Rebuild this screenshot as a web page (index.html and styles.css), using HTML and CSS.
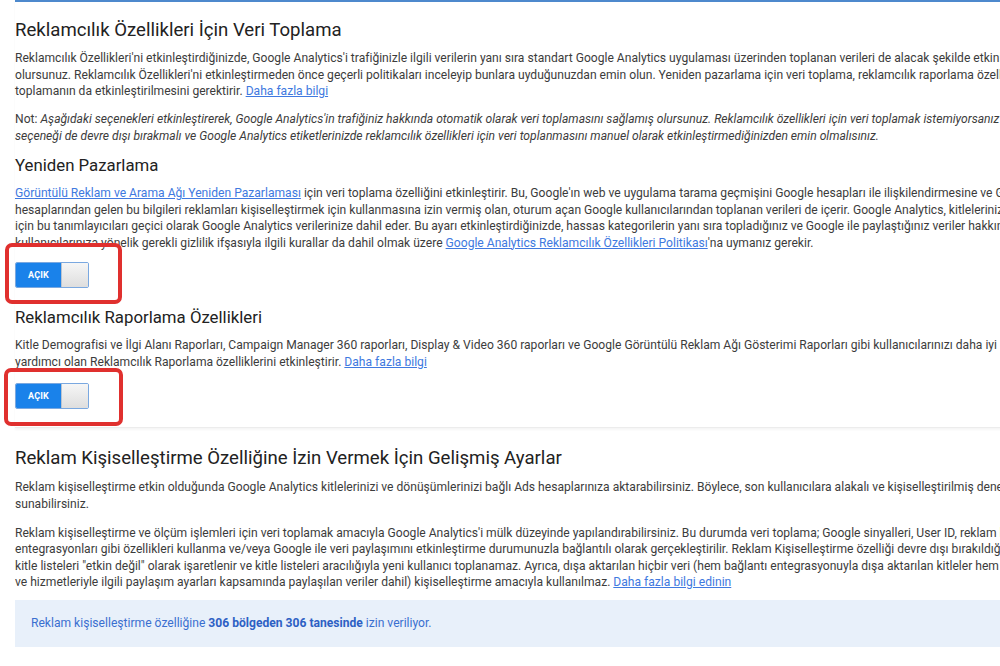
FILE: index.html
```html
<!DOCTYPE html>
<html lang="tr">
<head>
<meta charset="utf-8">
<link rel="stylesheet" href="styles.css">
</head>
<body>
<div class="page">
  <section class="card">
    <h1 class="title">Reklamcılık Özellikleri İçin Veri Toplama</h1>
    <p class="text">
      <span class="ln">Reklamcılık Özellikleri'ni etkinleştirdiğinizde, Google Analytics'i trafiğinizle ilgili verilerin yanı sıra standart Google Analytics uygulaması üzerinden toplanan verileri de alacak şekilde etkinleştirmiş</span>
      <span class="ln">olursunuz. Reklamcılık Özellikleri'ni etkinleştirmeden önce geçerli politikaları inceleyip bunlara uyduğunuzdan emin olun. Yeniden pazarlama için veri toplama, reklamcılık raporlama özelliklerinin</span>
      <span class="ln">toplamanın da etkinleştirilmesini gerektirir. <a href="#" class="link">Daha fazla bilgi</a></span>
    </p>
    <p class="text note">
      <span class="ln">Not: <em>Aşağıdaki seçenekleri etkinleştirerek, Google Analytics'in trafiğiniz hakkında otomatik olarak veri toplamasını sağlamış olursunuz. Reklamcılık özellikleri için veri toplamak istemiyorsanız</em></span>
      <span class="ln"><em>seçeneği de devre dışı bırakmalı ve Google Analytics etiketlerinizde reklamcılık özellikleri için veri toplanmasını manuel olarak etkinleştirmediğinizden emin olmalısınız.</em></span>
    </p>

    <h2 class="subtitle">Yeniden Pazarlama</h2>
    <p class="text sub">
      <span class="ln"><a href="#" class="link">Görüntülü Reklam ve Arama Ağı Yeniden Pazarlaması</a> için veri toplama özelliğini etkinleştirir. Bu, Google'ın web ve uygulama tarama geçmişini Google hesapları ile ilişkilendirmesine ve Google</span>
      <span class="ln">hesaplarından gelen bu bilgileri reklamları kişiselleştirmek için kullanmasına izin vermiş olan, oturum açan Google kullanıcılarından toplanan verileri de içerir. Google Analytics, kitlelerinizi</span>
      <span class="ln">için bu tanımlayıcıları geçici olarak Google Analytics verilerinize dahil eder. Bu ayarı etkinleştirdiğinizde, hassas kategorilerin yanı sıra topladığınız ve Google ile paylaştığınız veriler hakkında</span>
      <span class="ln">kullanıcılarınıza yönelik gerekli gizlilik ifşasıyla ilgili kurallar da dahil olmak üzere <a href="#" class="link">Google Analytics Reklamcılık Özellikleri Politikası</a>'na uymanız gerekir.</span>
    </p>
    <div class="toggle-wrap">
      <div class="toggle"><span class="toggle-on">AÇIK</span><span class="toggle-knob"></span></div>
      <div class="mark mark-a"></div>
    </div>

    <h2 class="subtitle second">Reklamcılık Raporlama Özellikleri</h2>
    <p class="text sub">
      <span class="ln">Kitle Demografisi ve İlgi Alanı Raporları, Campaign Manager 360 raporları, Display &amp; Video 360 raporları ve Google Görüntülü Reklam Ağı Gösterimi Raporları gibi kullanıcılarınızı daha iyi anlamanıza</span>
      <span class="ln">yardımcı olan Reklamcılık Raporlama özelliklerini etkinleştirir. <a href="#" class="link">Daha fazla bilgi</a></span>
    </p>
    <div class="toggle-wrap last">
      <div class="toggle"><span class="toggle-on">AÇIK</span><span class="toggle-knob"></span></div>
      <div class="mark mark-b"></div>
    </div>
  </section>

  <section class="card card2">
    <h1 class="title">Reklam Kişiselleştirme Özelliğine İzin Vermek İçin Gelişmiş Ayarlar</h1>
    <p class="text">
      <span class="ln">Reklam kişiselleştirme etkin olduğunda Google Analytics kitlelerinizi ve dönüşümlerinizi bağlı Ads hesaplarınıza aktarabilirsiniz. Böylece, son kullanıcılara alakalı ve kişiselleştirilmiş deneyimler</span>
      <span class="ln">sunabilirsiniz.</span>
    </p>
    <p class="text note">
      <span class="ln">Reklam kişiselleştirme ve ölçüm işlemleri için veri toplamak amacıyla Google Analytics'i mülk düzeyinde yapılandırabilirsiniz. Bu durumda veri toplama; Google sinyalleri, User ID, reklam bağlantı</span>
      <span class="ln">entegrasyonları gibi özellikleri kullanma ve/veya Google ile veri paylaşımını etkinleştirme durumunuzla bağlantılı olarak gerçekleştirilir. Reklam Kişiselleştirme özelliği devre dışı bırakıldığında</span>
      <span class="ln">kitle listeleri "etkin değil" olarak işaretlenir ve kitle listeleri aracılığıyla yeni kullanıcı toplanamaz. Ayrıca, dışa aktarılan hiçbir veri (hem bağlantı entegrasyonuyla dışa aktarılan kitleler hem de</span>
      <span class="ln">ve hizmetleriyle ilgili paylaşım ayarları kapsamında paylaşılan veriler dahil) kişiselleştirme amacıyla kullanılmaz. <a href="#" class="link">Daha fazla bilgi edinin</a></span>
    </p>
    <div class="info">Reklam kişiselleştirme özelliğine <strong>306 bölgeden 306 tanesinde</strong> izin veriliyor.</div>
  </section>
</div>
</body>
</html>
```

FILE: styles.css
```css
* { box-sizing: border-box; }
html, body {
  margin: 0;
  padding: 0;
  background: #ffffff;
  overflow: hidden;
}
body {
  width: 1000px;
  height: 666px;
  font-family: Roboto, "Noto Sans", "Liberation Sans", sans-serif;
  color: #3c3c3c;
}
.page {
  width: 1300px;
  padding-left: 15px;
}
.card {
  border-top: 2px solid #4d89cd;
  padding-bottom: 18px;
  border-bottom: 1px solid #ececec;
  box-shadow: 0 2px 2px rgba(0,0,0,0.04);
}
.card2 {
  border-top: none;
  box-shadow: none;
  border-bottom: none;
  padding-top: 18px;
}
.title {
  margin: 16px 0 0;
  font-size: 18.6px;
  line-height: 24px;
  font-weight: 400;
  color: #222;
}
.card2 .title { margin-top: 0; }
.subtitle {
  margin: 11px 0 0;
  font-size: 16.8px;
  line-height: 20px;
  font-weight: 400;
  color: #222;
}
.subtitle.second { margin-top: 19px; }
.text {
  margin: 8px 0 0;
  font-size: 12.1px;
  line-height: 16.5px;
}
.card2 .text { margin-top: 9px; }
.text.note { margin-top: 11.5px; }
.card2 .text.note { margin-top: 12.5px; }
.text.sub { margin-top: 10px; }
.ln {
  display: block;
  white-space: nowrap;
}
.link {
  color: #4079e0;
  text-decoration: underline;
}
.toggle-wrap {
  position: relative;
  margin-top: 11px;
  width: 74px;
  height: 26px;
}
.toggle-wrap.last { margin-top: 13px; }
.toggle {
  display: flex;
  width: 74px;
  height: 26px;
  border-radius: 2px;
  overflow: hidden;
  border: 1px solid #7aa8e0;
}
.toggle-on {
  width: 45px;
  background: #1a82ea;
  color: #fff;
  font-size: 9px;
  font-weight: 700;
  display: flex;
  align-items: center;
  justify-content: center;
  letter-spacing: 0.2px;
}
.toggle-knob {
  flex: 1;
  background: linear-gradient(#f6f6f6, #dedede);
  border-left: 1px solid #b9c3d0;
}
.mark {
  position: absolute;
  border: 4px solid #e0302e;
  border-radius: 7px;
}
.mark-a {
  left: -10px;
  top: -19px;
  width: 117px;
  height: 61px;
}
.mark-b {
  left: -11px;
  top: -15px;
  width: 119px;
  height: 58px;
}
.info {
  margin-top: 9px;
  height: 47px;
  background: #e8f0fa;
  color: #3a6fd0;
  font-size: 12.1px;
  line-height: 47px;
  padding-left: 16px;
}
.info strong {
  font-weight: 700;
  color: #2d60c4;
}
```
